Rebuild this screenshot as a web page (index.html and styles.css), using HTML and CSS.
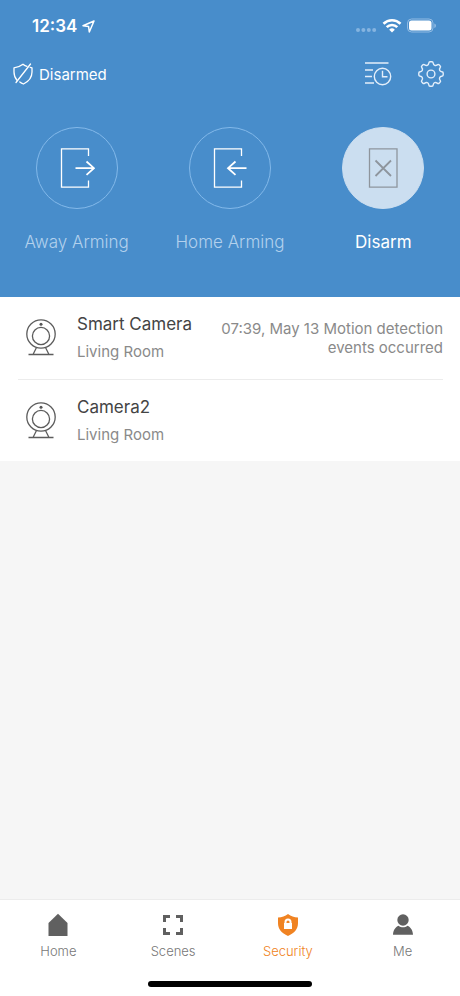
FILE: index.html
```html
<!DOCTYPE html>
<html lang="en">
<head>
    <meta charset="UTF-8">
    <meta name="viewport" content="width=device-width, initial-scale=1.0">
    <title>Security</title>
    <link rel="stylesheet" href="styles.css">
</head>
<body>

<!-- shared camera icon -->
<svg class="sprite" width="0" height="0" aria-hidden="true">
    <symbol id="camera" viewBox="0 0 30 38">
        <g fill="none" stroke="#5c5c5c" stroke-width="1.300">
            <circle cx="15" cy="15" r="14.2"/>
            <circle cx="15" cy="17" r="8.6"/>
            <path d="M10.500 28.500 7 35.500M19.500 28.500l3.500 7M2.500 35.500h25" />
        </g>
        <circle cx="15" cy="5.300" r="1.500" fill="#555"/>
    </symbol>
</svg>

<header class="header">
    <div class="status-bar">
        <div class="clock">
            <span>12:34</span>
            <svg width="13" height="13" viewBox="0 0 13 13" fill="none" stroke="#fff" stroke-width="1.500" stroke-linejoin="round"><path d="M12 1 1 5.700l5.600.800.700 5.500z"/></svg>
        </div>
        <div class="signals">
            <svg width="22" height="16" viewBox="0 0 22 16" fill="#85b4e0">
                <circle cx="3" cy="12" r="2"/><circle cx="8.400" cy="12" r="2"/><circle cx="13.800" cy="12" r="2"/><circle cx="19.200" cy="12" r="2"/>
            </svg>
            <svg width="20" height="16" viewBox="0 0 20 16">
                <g fill="none" stroke="#fff" stroke-width="2.600">
                    <path d="M1.500 5.700a12.200 12.200 0 0 1 17 0"/>
                    <path d="M4.700 9.200a7.500 7.500 0 0 1 10.600 0"/>
                </g>
                <path fill="#fff" d="M10 14.500 7.200 11.700a4 4 0 0 1 5.600 0z"/>
            </svg>
            <svg width="30" height="16" viewBox="0 0 30 16">
                <rect x=".5" y="1" width="25.500" height="13" rx="4" fill="none" stroke="#91bbe3"/>
                <rect x="2" y="2.500" width="22.500" height="10" rx="2.500" fill="#fff"/>
                <path d="M27.300 5.500V10q1.700-.6 1.700-2.250t-1.700-2.250z" fill="#91bbe3"/>
            </svg>
        </div>
    </div>

    <div class="toolbar">
        <div class="state">
            <svg width="20" height="22" viewBox="0 0 20 22" fill="none" stroke="#fff" stroke-width="1.300" stroke-linecap="round" stroke-linejoin="round">
                <path d="M14 3.400C12.500 3 11.200 2.200 10 1.200 7.500 3.200 4.500 4.200 1 4.800V9c0 3.500 1 6 3 8.200"/>
                <path d="M17.200 4.400 19 4.800V9c0 6-3.500 9.500-8.500 12-1.500-.5-2.700-1.200-3.700-2"/>
                <path d="M17.500 1 3 19.500"/>
            </svg>
            <span>Disarmed</span>
        </div>
        <div class="actions">
            <button class="icon-button" aria-label="History">
                <svg width="28" height="26" viewBox="0 0 28 26" fill="none" stroke="#e3eefa" stroke-width="1.400">
                    <path d="M1 2h23.500M1 9h8M1 15.500h7M1 22h9"/>
                    <circle cx="18.500" cy="15.500" r="8.200"/>
                    <path d="M18.500 9.800v5.900h5"/>
                </svg>
            </button>
            <button class="icon-button" aria-label="Settings">
                <svg width="26" height="26" viewBox="0 0 26 26" fill="none" stroke="#e3eefa" stroke-width="1.400" stroke-linejoin="round">
                    <path d="M10.800 2.200Q11 .8 12 .8h2q1 0 1.200 1.400c.3 2.200 2.300 3 4 1.700q1.100-.9 1.900-.1l1.100 1.100q.8.800-.1 1.900c-1.300 1.700-.5 3.700 1.700 4q1.400.2 1.400 1.200v2q0 1-1.400 1.200c-2.200.3-3 2.300-1.700 4q.9 1.100.1 1.900l-1.100 1.100q-.8.800-1.900-.1c-1.700-1.300-3.700-.5-4 1.700q-.2 1.400-1.200 1.400h-2q-1 0-1.200-1.400c-.3-2.200-2.300-3-4-1.700q-1.100.9-1.900.1l-1.100-1.100q-.8-.8.100-1.900c1.300-1.700.5-3.700-1.700-4Q.8 15 .8 14v-2q0-1 1.400-1.200c2.200-.3 3-2.300 1.700-4q-.9-1.100-.1-1.900l1.100-1.100q.8-.8 1.900.1c1.700 1.300 3.700.5 4-1.700z"/>
                    <circle cx="13" cy="13" r="3.900"/>
                </svg>
            </button>
        </div>
    </div>

    <div class="modes">
        <button class="mode">
            <span class="mode-icon">
                <svg width="36" height="40" viewBox="0 0 36 40" fill="none" stroke="#fff">
                    <path stroke-width="1.300" d="M29.500 8V.8H2.500v38.400h27V32.500"/>
                    <path stroke-width="1.800" d="M16.500 20.200H35M27.500 13.500l7.500 6.700-7.500 6.700"/>
                </svg>
            </span>
            <span class="mode-label">Away Arming</span>
        </button>
        <button class="mode">
            <span class="mode-icon">
                <svg width="36" height="40" viewBox="0 0 36 40" fill="none" stroke="#fff">
                    <path stroke-width="1.300" d="M29.500 8V.8H2.500v38.400h27V32.500"/>
                    <path stroke-width="1.800" d="M34.500 20.200H16M23.500 13.500 16 20.200l7.500 6.700"/>
                </svg>
            </span>
            <span class="mode-label">Home Arming</span>
        </button>
        <button class="mode active">
            <span class="mode-icon">
                <svg width="30" height="40" viewBox="0 0 30 40" fill="none" stroke="#8e959d">
                    <path stroke-width="1.300" d="M1.500.8h27.500v38.400H1.500z"/>
                    <path stroke-width="1.800" d="M7.500 12.500l15.500 15.500M23 12.500 7.500 28"/>
                </svg>
            </span>
            <span class="mode-label">Disarm</span>
        </button>
    </div>
</header>

<main class="devices">
    <div class="device">
        <svg class="device-icon" width="30" height="38"><use href="#camera"/></svg>
        <div class="device-text">
            <div class="device-name">Smart Camera</div>
            <div class="device-room">Living Room</div>
        </div>
        <p class="device-event">07:39, May 13 Motion detection events occurred</p>
    </div>
    <div class="device">
        <svg class="device-icon" width="30" height="38"><use href="#camera"/></svg>
        <div class="device-text">
            <div class="device-name">Camera2</div>
            <div class="device-room">Living Room</div>
        </div>
    </div>
</main>

<footer class="footer">
    <nav class="tabs">
        <a href="#" class="tab">
            <svg width="24" height="24" viewBox="0 0 24 24" fill="#606060"><path d="M12 .8l9.500 9.200v13h-19V10z"/></svg>
            <span>Home</span>
        </a>
        <a href="#" class="tab">
            <svg width="24" height="24" viewBox="0 0 24 24" fill="none" stroke="#606060" stroke-width="3"><path d="M3.500 9V3.500H9M15 3.500h5.500V9M20.500 15v5.500H15M9 20.500H3.500V15"/></svg>
            <span>Scenes</span>
        </a>
        <a href="#" class="tab active">
            <svg width="24" height="24" viewBox="0 0 24 24">
                <path fill="#f08322" d="M12 1c3 2.200 6 3.200 10 3.500V10c0 6-3.500 10-10 13C5.500 20 2 16 2 10V4.500C6 4.200 9 3.200 12 1z"/>
                <path fill="#fff" d="M8 10h.5V9a3.500 3.500 0 0 1 7 0v1h.5v6H8z"/>
                <path fill="#f08322" d="M10.500 10V9a1.500 1.500 0 0 1 3 0v1z"/>
            </svg>
            <span>Security</span>
        </a>
        <a href="#" class="tab">
            <svg width="24" height="24" viewBox="0 0 24 24" fill="#606060"><circle cx="12" cy="7" r="5.700"/><path d="M2 21.800c.3-5 2.500-7.500 5.500-9 2.800 2 6.200 2 9 0 3 1.500 5.200 4 5.500 9z"/></svg>
            <span>Me</span>
        </a>
    </nav>
    <div class="home-indicator"></div>
</footer>

</body>
</html>
```
FILE: styles.css
```css
* {
    box-sizing: border-box;
}
body {
    margin: 0;
    min-height: 100vh;
    display: flex;
    flex-direction: column;
    background: #f6f6f6;
    font-family: Inter, "Liberation Sans", sans-serif;
}
.sprite { position: absolute; }
svg {
    display: block;
    flex: none;
}
button {
    padding: 0;
    border: none;
    background: none;
    color: inherit;
    font: inherit;
    cursor: pointer;
}

.header {
    background: #488dcb;
    color: #fff;
    padding-bottom: 43px;
}
.status-bar {
    display: flex;
    justify-content: space-between;
    padding: 16px 23px 0 32px;
}
.clock, .signals {
    display: flex;
    align-items: center;
    gap: 5px;
    height: 20px;
}
.clock {
    font-size: 17px;
    font-weight: 600;
}
.toolbar {
    display: flex;
    justify-content: space-between;
    align-items: center;
    padding: 20px 16px 0 13px;
    height: 56px;
}
.state, .actions {
    display: flex;
    align-items: center;
}
.state {
    gap: 6px;
    font-size: 15px;
}
.actions { gap: 26px; }

.modes {
    display: grid;
    grid-template-columns: repeat(3, 1fr);
    padding-top: 35px;
}
.mode {
    display: flex;
    flex-direction: column;
    align-items: center;
    gap: 22px;
    color: #b3d1ed;
}
.mode-icon {
    display: flex;
    align-items: center;
    justify-content: center;
    width: 82px;
    height: 82px;
    border: 1px solid #83b9ea;
    border-radius: 50%;
}
.mode-label {
    font-size: 17px;
    font-weight: 300;
    line-height: 23px;
}
.mode.active { color: #fff; }
.mode.active .mode-label { font-weight: 400; }
.mode.active .mode-icon {
    background: #cbdef0;
    border-color: #cbdef0;
}

.devices {
    background: #fff;
    padding: 0 17px 0 18px;
}
.device {
    display: flex;
    align-items: center;
    min-height: 82px;
    padding-left: 8px;
}
.device + .device { border-top: 1px solid #ececec; }
.device-text {
    margin-left: 21px;
    white-space: nowrap;
}
.device-name {
    font-size: 17px;
    line-height: 28px;
    color: #444;
}
.device-room {
    font-size: 15px;
    line-height: 28px;
    color: #8a8a8a;
}
.device-event {
    flex: 1;
    margin: 0 0 0 20px;
    font-size: 15px;
    line-height: 19px;
    text-align: right;
    color: #8a8a8a;
}

.footer {
    margin-top: auto;
    background: #fff;
    border-top: 1px solid #ececec;
    padding: 13px 0 9px;
}
.tabs {
    display: grid;
    grid-template-columns: repeat(4, 1fr);
    padding-left: 1px;
}
.tab {
    display: flex;
    flex-direction: column;
    align-items: center;
    gap: 5px;
    color: #777;
    font-size: 13px;
    font-weight: 300;
    line-height: 18px;
    text-decoration: none;
}
.tab.active { color: #f08322; }
.home-indicator {
    width: 164px;
    height: 6px;
    margin: 21px auto 0;
    border-radius: 3px;
    background: #000;
}
```
